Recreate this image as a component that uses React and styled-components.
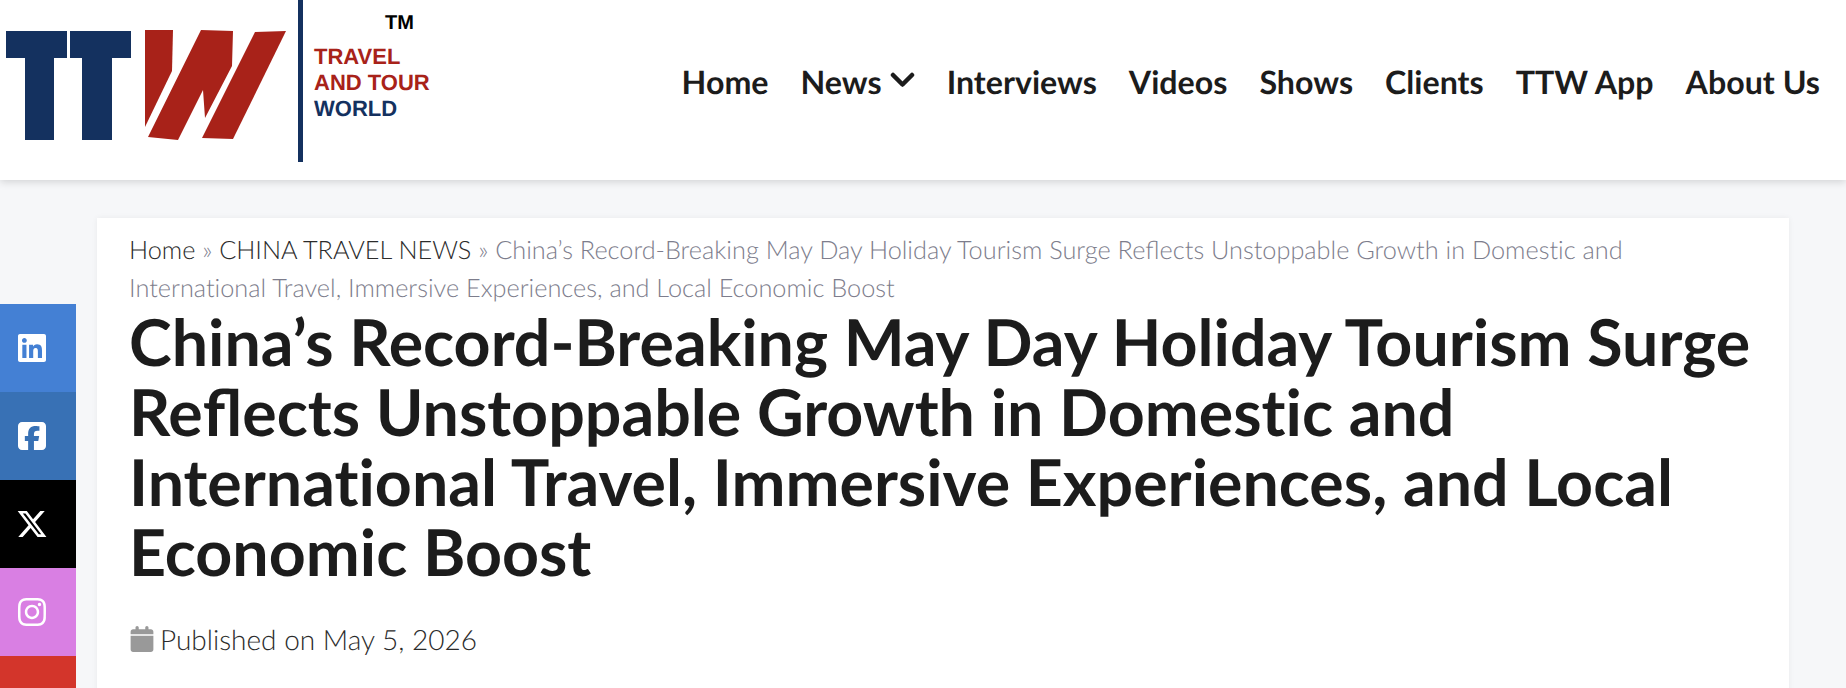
import React from 'react';
import styled, { createGlobalStyle } from 'styled-components';
import { FaLinkedin, FaSquareFacebook, FaXTwitter, FaInstagram, FaCalendar } from 'react-icons/fa6';

const GlobalStyle = createGlobalStyle`
  html, body {
    margin: 0;
    height: 688px;
    overflow: hidden;
    background: #f6f7f9;
    font-family: Lato, "Open Sans", sans-serif;
    text-rendering: geometricPrecision;
    font-variant-ligatures: none;
  }
`;

const Header = styled.header`
  height: 180px;
  background: #fff;
  box-shadow: 0 2px 8px rgba(0, 0, 0, 0.15);
  display: flex;
  justify-content: space-between;
  padding-right: 26px;
  position: relative;
`;

const Logo = styled.div`
  display: flex;
  height: 180px;
`;

const Mark = styled.svg`
  width: 298px;
  height: 180px;
  display: block;
`;

const LogoRule = styled.div`
  width: 5px;
  height: 162px;
  background: #14315f;
`;

const LogoText = styled.div`
  margin-left: 11px;
  width: 130px;
  font-family: "Liberation Sans", Arial, sans-serif;
  font-weight: 700;
  font-size: 22px;
  line-height: 26px;
  color: #a82219;
`;

const Tm = styled.div`
  color: #000;
  font-size: 20px;
  line-height: 20px;
  margin: 13px 0 11px 71px;
`;

const World = styled.div`
  color: #14315f;
`;

const Nav = styled.nav`
  display: flex;
  gap: 32px;
  height: 162px;
  align-items: center;
  font-size: 32.2px;
  font-weight: 700;
  color: #1c1c1c;
`;

const NavItem = styled.a`
  display: flex;
  align-items: center;
  gap: 8px;
`;

const Chevron = styled.svg`
  width: 25px;
  height: 16px;
  fill: none;
  stroke: currentColor;
  stroke-width: 4.5;
  stroke-linecap: round;
  stroke-linejoin: round;
  margin-top: -3px;
`;

const Side = styled.aside`
  position: absolute;
  left: 0;
  top: 304px;
  width: 76px;
`;

const SideLink = styled.a`
  height: 88px;
  display: flex;
  align-items: center;
  padding-left: 16px;
  color: #fff;
  font-size: 32px;
  background: ${p => p.$bg};
`;

const Main = styled.main`
  padding: 38px 57px 0 97px;
`;

const Card = styled.article`
  background: #fff;
  box-shadow: 0 0 6px rgba(0, 0, 0, 0.06);
  padding: 13px 32px 60px;
  min-height: 500px;
`;

const Crumbs = styled.div`
  font-size: 25.3px;
  font-weight: 300;
  line-height: 38px;
  color: #7d7d8c;
  margin-bottom: -1px;
  a {
    color: #2b2b2b;
  }
`;

const Title = styled.h1`
  margin: 0;
  font-size: 64.5px;
  font-weight: 700;
  line-height: 70px;
  color: #1c1c1c;
`;

// only the "fl" pair is joined in the reference, "ti" stays apart
const Lig = styled.span`
  font-variant-ligatures: common-ligatures;
`;

const Meta = styled.div`
  display: flex;
  align-items: center;
  gap: 5px;
  margin-top: 36px;
  font-size: 28px;
  font-weight: 300;
  color: #2b2b2b;
  svg {
    color: #999;
    font-size: 26px;
  }
`;

const socials = [
  { bg: '#4480d4', icon: <FaLinkedin /> },
  { bg: '#3871b5', icon: <FaSquareFacebook /> },
  { bg: '#000', icon: <FaXTwitter /> },
  { bg: '#d97fe3', icon: <FaInstagram /> },
  { bg: '#d3352b', icon: null },
];

const navItems = ['Home', 'News', 'Interviews', 'Videos', 'Shows', 'Clients', 'TTW App', 'About Us'];

const Headline = () => (
  <>China’s Record-Breaking May Day Holiday Tourism Surge Re<Lig>fl</Lig>ects Unstoppable Growth in Domestic and International Travel, Immersive Experiences, and Local Economic Boost</>
);

export default function App() {
  return (
    <>
      <GlobalStyle />
      <Header>
        <Logo>
          <Mark viewBox="0 0 298 180">
            <path fill="#14315f" d="M6 31h61v27H54v82H25V58H6z" />
            <path fill="#14315f" d="M70 31h61v27h-19v82H82V58H70z" />
            <path fill="#a82219" d="M145 30h28l-1 41-27 56z" />
            <path fill="#a82219" d="M201 30l32 1-1 35-27 52-2-28-25 50-30-3z" />
            <path fill="#a82219" d="M255 32l31-1-53 108-31-1z" />
          </Mark>
          <LogoRule />
          <LogoText>
            <Tm>TM</Tm>
            <div>TRAVEL</div>
            <div>AND TOUR</div>
            <World>WORLD</World>
          </LogoText>
        </Logo>
        <Nav>
          {navItems.map(item => (
            <NavItem key={item}>
              {item}
              {item === 'News' && (
                <Chevron viewBox="0 0 25 16">
                  <polyline points="3,3 12.5,12.5 22,3" />
                </Chevron>
              )}
            </NavItem>
          ))}
        </Nav>
      </Header>
      <Side>
        {socials.map(s => (
          <SideLink key={s.bg} $bg={s.bg}>{s.icon}</SideLink>
        ))}
      </Side>
      <Main>
        <Card>
          <Crumbs>
            <a>Home</a> » <a>CHINA TRAVEL NEWS</a> » <Headline />
          </Crumbs>
          <Title><Headline /></Title>
          <Meta><FaCalendar />Published on May 5, 2026</Meta>
        </Card>
      </Main>
    </>
  );
}
